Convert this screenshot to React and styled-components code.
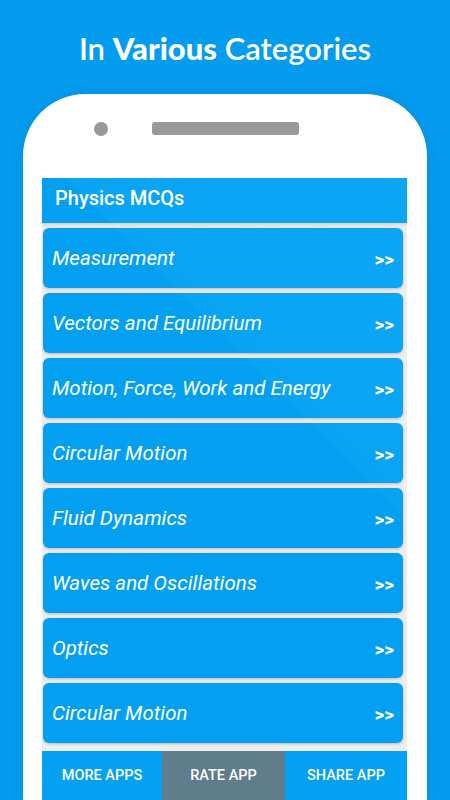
import React from "react";
import styled, { createGlobalStyle } from "styled-components";

const Global = createGlobalStyle`
  html, body { margin: 0; padding: 0; }
  body { background: #049cef; overflow: hidden; }
  * { box-sizing: border-box; }
`;

const sheen = `
  background-image: linear-gradient(
    225deg,
    #0ca7f5 0%,
    #09a5f4 45%,
    #03a0f2 45%,
    #03a0f2 100%
  );
  background-attachment: fixed;
`;

const Page = styled.div`
  width: 450px;
  height: 800px;
  display: flex;
  flex-direction: column;
  align-items: center;
  background: #049cef;
`;

const Title = styled.h1`
  margin: 26px 0 0;
  height: 44px;
  line-height: 44px;
  font-family: "Lato", "DejaVu Sans", sans-serif;
  font-weight: 600;
  font-size: 31px;
  color: #fff;
  letter-spacing: 0px;
  b { font-weight: 900; }
`;

const Phone = styled.div`
  margin-top: 24px;
  width: 404px;
  flex: 1;
  align-self: flex-start;
  margin-left: 23px;
  background: #fff;
  border-radius: 62px 62px 0 0;
  display: flex;
  flex-direction: column;
  box-shadow: 0 0 14px rgba(0, 60, 120, 0.15);
`;

const PhoneTop = styled.div`
  height: 84px;
  display: flex;
  align-items: flex-start;
  padding-left: 71px;
  padding-top: 28px;
  gap: 44px;
`;

const Camera = styled.span`
  width: 14px;
  height: 14px;
  border-radius: 50%;
  background: #999;
`;

const Speaker = styled.span`
  width: 147px;
  height: 13px;
  border-radius: 3px;
  background: #999;
`;

const Screen = styled.div`
  margin: 0 20px 0 19px;
  flex: 1;
  background: #eeeeee;
  display: flex;
  flex-direction: column;
`;

const Header = styled.div`
  height: 45px;
  ${sheen}
  color: #fff;
  font-family: "Roboto", sans-serif;
  font-weight: 500;
  font-size: 20px;
  display: flex;
  align-items: center;
  padding-left: 13px;
  padding-bottom: 6px;
  box-shadow: 0 2px 3px rgba(0, 0, 0, 0.12);
`;

const List = styled.div`
  display: flex;
  flex-direction: column;
  gap: 5px;
  padding: 5px 4px 0 1px;
`;

const Card = styled.div`
  height: 60px;
  border-radius: 6px;
  ${sheen}
  box-shadow: 0 1px 3px rgba(0, 0, 0, 0.22);
  display: flex;
  align-items: center;
  justify-content: space-between;
  padding: 0 9px 0 9px;
  color: #fff;
`;

const CardLabel = styled.span`
  font-family: "Roboto", sans-serif;
  font-style: italic;
  font-size: 20.5px;
`;

const Arrow = styled.span`
  font-family: "Roboto", sans-serif;
  font-weight: 700;
  font-size: 19px;
  letter-spacing: 0px;
  padding-top: 3px;
`;

const BottomBar = styled.div`
  margin-top: auto;
  height: 49px;
  display: grid;
  grid-template-columns: 120px 123px 1fr;
  background: #04a1f3;
`;

const BarButton = styled.div`
  display: flex;
  align-items: center;
  justify-content: center;
  font-family: "Roboto", sans-serif;
  font-weight: 500;
  font-size: 14.5px;
  color: #fff;
  background: ${(p) => (p.$active ? "#607d8b" : "transparent")};
`;

const items = [
  "Measurement",
  "Vectors and Equilibrium",
  "Motion, Force, Work and Energy",
  "Circular Motion",
  "Fluid Dynamics",
  "Waves and Oscillations",
  "Optics",
  "Circular Motion",
];

export default function App() {
  return (
    <Page>
      <Global />
      <Title>
        In <b>Various</b> Categories
      </Title>
      <Phone>
        <PhoneTop>
          <Camera />
          <Speaker />
        </PhoneTop>
        <Screen>
          <Header>Physics MCQs</Header>
          <List>
            {items.map((t, i) => (
              <Card key={i}>
                <CardLabel>{t}</CardLabel>
                <Arrow>&gt;&gt;</Arrow>
              </Card>
            ))}
          </List>
          <BottomBar>
            <BarButton>MORE APPS</BarButton>
            <BarButton $active>RATE APP</BarButton>
            <BarButton>SHARE APP</BarButton>
          </BottomBar>
        </Screen>
      </Phone>
    </Page>
  );
}
